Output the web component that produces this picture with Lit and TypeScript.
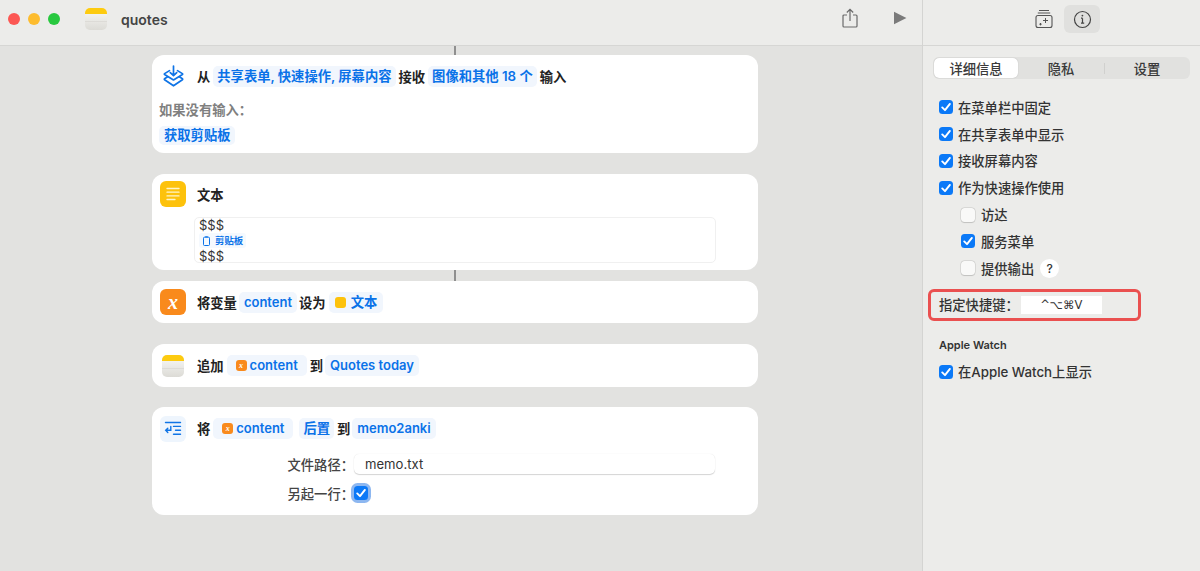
import { LitElement, html, css, svg } from "lit";
import { customElement } from "lit/decorators.js";

const check = svg`<svg viewBox="0 0 14 14" width="14" height="14"><path d="M3.2 7.4 6 10.2 10.9 3.9" fill="none" stroke="#fff" stroke-width="1.9" stroke-linecap="round" stroke-linejoin="round"/></svg>`;

const miniVar = html`<span class="mini orange">x</span>`;

@customElement("app-root")
export class AppRoot extends LitElement {
  static styles = css`
    :host { display: block; width: 1200px; height: 571px; overflow: hidden; background: #e2e2e0; color: #2a2a2a;
      font-family: "Inter", "Noto Sans CJK SC", sans-serif; font-size: 13.3px; }
    * { box-sizing: border-box; }
    .app { display: grid; grid-template-columns: 922px 278px; height: 571px; }
    .main { display: flex; flex-direction: column; min-width: 0; }
    .toolbar { height: 46px; flex: none; background: #ececea; border-bottom: 1px solid #d6d6d4; display: flex; align-items: center; padding: 0 0 7px 8px; }
    .lights { display: flex; gap: 8px; }
    .light { width: 12px; height: 12px; border-radius: 50%; }
    .red { background: #fc5753; }
    .amber { background: #fdbc2e; }
    .green { background: #28c83f; }
    .appicon { margin-left: 24px; display: flex; }
    .title { margin-left: 13px; font-size: 14px; font-weight: 600; color: #444; }
    .tools { margin-left: auto; display: flex; align-items: center; gap: 35px; padding: 0 15px 2px 0; }
    .canvas { flex: 1; display: flex; flex-direction: column; padding-left: 152px; }
    .stem { width: 2px; background: #8f8f8f; margin-left: 302px; flex: none; }
    .s9 { height: 9px; }
    .s11 { height: 11px; }
    .gap21 { height: 21px; flex: none; }
    .gap20 { height: 20px; flex: none; }
    .card { width: 606px; background: #fff; border-radius: 12px; flex: none; }
    .h98 { height: 98px; }
    .h96 { height: 96px; }
    .h42 { height: 42px; }
    .h43 { height: 43px; }
    .h108 { height: 108px; }
    .row { display: flex; align-items: center; height: 42px; padding-left: 8px; }
    .row.r40 { height: 40px; }
    .row.r43 { height: 43px; }
    .icon { width: 26px; height: 26px; flex: none; margin-right: 11px; display: flex; align-items: center; justify-content: center; border-radius: 6px; }
    .bg-yellow { background: #fdc20c; }
    .bg-orange { background: #f98a1c; color: #fff; font: italic 700 20px "Liberation Serif", serif; }
    .bg-blue { background: #eef5fd; }
    .word { font-weight: 600; color: #222; }
    .chip { background: #f1f6fd; color: #0a72e8; font-weight: 600; border-radius: 5px; padding: 0 4px; height: 21px; line-height: 21px; margin: 0 3px; display: inline-flex; align-items: center; white-space: nowrap; }
    .chip.p5 { padding: 0 5px; }
    .chip.p9 { padding: 0 9px; }
    .chip.p6 { padding: 0 6px; }
    .chip.tight { margin: 0 2px; }
    .en { font-size: 13px; }
    .mini { width: 11px; height: 11px; border-radius: 3px; margin-right: 3px; flex: none; display: inline-block; }
    .mini.m5 { margin-right: 5px; }
    .orange { background: #f98a1c; color: #fff; font: italic 700 8px/11px "Liberation Serif", serif; text-align: center; }
    .yellow { background: #fdc20c; }
    .gray { color: #7f7f7f; font-weight: 600; padding: 0 0 0 7px; height: 20px; line-height: 20px; margin-top: 3px; }
    .orphan { padding-left: 7px; margin-top: 6px; display: flex; }
    .orphan .chip { margin: 0; height: 19px; line-height: 19px; padding: 0 5px; }
    .textbox { margin: 3px 0 0 42px; width: 522px; height: 46px; border: 1px solid #f0f0f0; border-radius: 5px; padding: 0 4px; font-size: 13px; color: #333; line-height: 15px; }
    .pill { display: inline-flex; align-items: center; gap: 5px; color: #0a72e8; font-size: 9.4px; font-weight: 600; height: 15px; padding: 0 3px 0 4px; background: #f5f9fe; border-radius: 3px; line-height: 15px; }
    .field { display: flex; align-items: center; height: 20px; }
    .f1 { margin-top: 4px; }
    .f2 { margin-top: 9px; }
    .flabel { width: 202px; text-align: right; color: #444; font-weight: 500; flex: none; white-space: nowrap; }
    .input { width: 361px; height: 20px; background: #fff; border-radius: 5px; box-shadow: 0 1px 1px rgba(0,0,0,.16), 0 0 1px rgba(0,0,0,.12); padding-left: 11px; line-height: 20px; font-size: 13.1px; color: #333; }
    .bigcheck { width: 14px; height: 14px; border-radius: 3.5px; background: #0b79f7; display: flex; box-shadow: 0 0 0 3px #8db7f0; }
    .side { background: #ececea; border-left: 1px solid #d4d4d2; display: flex; flex-direction: column; }
    .sidetools { height: 46px; border-bottom: 1px solid #d6d6d4; display: flex; align-items: center; gap: 2.5px; padding: 0 0 7px 102.5px; flex: none; }
    .sidetool { width: 36px; height: 28px; border-radius: 6px; display: flex; align-items: center; justify-content: center; }
    .sidetool.active { background: #e0e0de; }
    .seg { margin: 11px 0 0 10px; width: 257px; height: 22px; background: #e1e1df; border-radius: 6px; display: grid; grid-template-columns: 85px 86px 86px; }
    .seg div { display: flex; align-items: center; justify-content: center; color: #3a3a3a; font-weight: 500; position: relative; }
    .seg .on { background: #fff; border-radius: 5px; margin: 1px 0 1px 1px; box-shadow: 0 0 1px rgba(0,0,0,.25); }
    .seg .sep { position: absolute; left: 0; top: 6px; height: 11px; border-left: 1px solid #d0d0ce; }
    .list { margin-top: 15px; padding-left: 16px; display: flex; flex-direction: column; }
    .opt { display: flex; align-items: center; height: 26.8px; gap: 5px; color: #333; font-weight: 500; white-space: nowrap; }
    .opt.sub { padding-left: 22px; gap: 6px; }
    .box { width: 14px; height: 14px; border-radius: 3.5px; flex: none; display: flex; background: #0b79f7; }
    .box.off { background: #f9f9f8; box-shadow: 0 0 0 .5px rgba(0,0,0,.14), 0 .5px 1px rgba(0,0,0,.12); }
    .help { width: 19px; height: 19px; border-radius: 50%; background: #fff; display: flex; align-items: center; justify-content: center; font-size: 12px; color: #333; }
    .shortcut { margin: 7px 0 0 5px; width: 213px; height: 32px; border: 3px solid #ea5050; border-radius: 6px; display: flex; align-items: center; padding-left: 8px; color: #333; font-weight: 500; }
    .keys { margin-left: 2px; width: 81px; height: 18px; background: #fff; text-align: center; line-height: 18px; font-size: 11.5px; font-family: "DejaVu Sans", sans-serif; }
    .h { margin: 17px 0 0 16px; font-size: 11px; font-weight: 600; color: #333; height: 15px; line-height: 15px; }
    .list.last { margin-top: 6px; }
  `;

  private box(on: boolean) {
    return html`<span class="box ${on ? "" : "off"}">${on ? check : ""}</span>`;
  }

  private opt(label: string, on: boolean, sub = false, extra: unknown = "") {
    return html`<div class="opt ${sub ? "sub" : ""}">${this.box(on)}<span>${label}</span>${extra}</div>`;
  }

  private notes(size: number) {
    const id = `n${size}`;
    return svg`<svg width=${size} height=${size} viewBox="0 0 24 24">
      <defs><linearGradient id=${id} x1="0" y1="0" x2="0" y2="1"><stop offset="0" stop-color="#fafaf8"/><stop offset="1" stop-color="#dcdbd6"/></linearGradient></defs>
      <rect x="1" y="1" width="22" height="22" rx="5" fill="url(#${id})"/>
      <path d="M1 7V6a5 5 0 0 1 5-5h12a5 5 0 0 1 5 5v1z" fill="#fdcb10"/>
      <path d="M1 14.5h22" stroke="#d5d4cf" stroke-width=".6"/></svg>`;
  }

  render() {
    return html`<div class="app">
      <div class="main">
        <div class="toolbar">
          <div class="lights">
            <span class="light red"></span>
            <span class="light amber"></span>
            <span class="light green"></span>
          </div>
          <span class="appicon">${this.notes(24)}</span>
          <span class="title">quotes</span>
          <div class="tools">
            <svg width="16" height="20" viewBox="0 0 16 20" fill="none" stroke="#6a6a6a" stroke-width="1.2"><path d="M5 7H2a1 1 0 0 0-1 1v10a1 1 0 0 0 1 1h12a1 1 0 0 0 1-1V8a1 1 0 0 0-1-1h-3"/><path d="M8 13V1.5M4.8 4.5 8 1.3l3.2 3.2"/></svg>
            <svg width="14" height="14" viewBox="0 0 14 14"><path d="M1 .8v12.4L13.4 7z" fill="#7a7a7a"/></svg>
          </div>
        </div>
        <div class="canvas">
          <div class="stem s9"></div>
          <div class="card h98">
            <div class="row">
              <span class="icon">
                <svg width="21" height="22" viewBox="0 0 21 22" fill="none" stroke="#0f74e6" stroke-width="1.7" stroke-linejoin="round" stroke-linecap="round"><path d="M6.5 5.6 1.6 8.6a.6.6 0 0 0 0 1L10.5 15l8.9-5.4a.6.6 0 0 0 0-1l-4.9-3"/><path d="M4.6 11.8 1.6 13.8a.6.6 0 0 0 0 1l8.9 6 8.9-6a.6.6 0 0 0 0-1l-3-2"/><path d="M10.5 1v9M7.3 7.6l3.2 3 3.2-3"/></svg>
              </span>
              <span class="word">从</span>
              <span class="chip">共享表单, 快速操作, 屏幕内容</span>
              <span class="word">接收</span>
              <span class="chip">图像和其他 18 个</span>
              <span class="word">输入</span>
            </div>
            <div class="gray">如果没有输入：</div>
            <div class="orphan"><span class="chip">获取剪贴板</span></div>
          </div>
          <div class="gap21"></div>
          <div class="card h96">
            <div class="row r40">
              <span class="icon bg-yellow">
                <svg width="16" height="14" viewBox="0 0 16 14" stroke="#fff5c9" stroke-width="1.3" stroke-linecap="round"><path d="M2 1.5h12M2 5.2h12M2 8.9h12M2 12.5h8"/></svg>
              </span>
              <span class="word">文本</span>
            </div>
            <div class="textbox">
              <div>$$$</div>
              <div><span class="pill"><svg width="7" height="10" viewBox="0 0 7 10" fill="none" stroke="#0a72e8"><rect x=".5" y="1.2" width="6" height="8.3" rx="1"/><path d="M2.2.8h2.6"/></svg>剪贴板</span></div>
              <div>$$$</div>
            </div>
          </div>
          <div class="stem s11"></div>
          <div class="card h42">
            <div class="row">
              <span class="icon bg-orange">x</span>
              <span class="word">将变量</span>
              <span class="chip p5 tight en">content</span>
              <span class="word">设为</span>
              <span class="chip p6"><span class="mini m5 yellow"></span>文本</span>
            </div>
          </div>
          <div class="gap21"></div>
          <div class="card h43">
            <div class="row r43">
              <span class="icon">${this.notes(24)}</span>
              <span class="word">追加</span>
              <span class="chip p9 en">${miniVar}content</span>
              <span class="word">到</span>
              <span class="chip p5 tight en">Quotes today</span>
            </div>
          </div>
          <div class="gap20"></div>
          <div class="card h108">
            <div class="row r43">
              <span class="icon bg-blue">
                <svg width="18" height="15" viewBox="0 0 18 15" fill="none" stroke="#0f74e6" stroke-width="1.4" stroke-linecap="round"><path d="M1.5 1.5h15M9.5 5.4h7M11.5 9.3h5M9.5 13.2h7"/><path d="M6.8 5.5v3.8H1.8M3.8 7.2 1.7 9.3l2.1 2.1"/></svg>
              </span>
              <span class="word">将</span>
              <span class="chip p9 en">${miniVar}content</span>
              <span class="chip">后置</span>
              <span class="word">到</span>
              <span class="chip p5 tight en">memo2anki</span>
            </div>
            <div class="field f1"><span class="flabel">文件路径：</span><span class="input">memo.txt</span></div>
            <div class="field f2"><span class="flabel">另起一行：</span><span class="bigcheck">${check}</span></div>
          </div>
        </div>
      </div>
      <div class="side">
        <div class="sidetools">
          <span class="sidetool">
            <svg width="18" height="20" viewBox="0 0 18 20" fill="none" stroke="#555" stroke-width="1.1"><path d="M4 1.5h10M2.8 4h12.4"/><rect x="1" y="6.5" width="16" height="12" rx="2"/><path d="M10.5 9v5M8 11.5h5M5.5 14v2.4M4.3 15.2h2.4" stroke-width="1"/></svg>
          </span>
          <span class="sidetool active">
            <svg width="19" height="19" viewBox="0 0 19 19" fill="none" stroke="#444" stroke-width="1.2"><circle cx="9.5" cy="9.5" r="8"/><path d="M9.5 8.2v5M8 8.2h1.5M8 13.2h3.2"/><circle cx="9.4" cy="5.6" r=".9" fill="#444" stroke="none"/></svg>
          </span>
        </div>
        <div class="seg">
          <div class="on">详细信息</div><div>隐私</div><div><span class="sep"></span>设置</div>
        </div>
        <div class="list">
          ${this.opt("在菜单栏中固定", true)}
          ${this.opt("在共享表单中显示", true)}
          ${this.opt("接收屏幕内容", true)}
          ${this.opt("作为快速操作使用", true)}
          ${this.opt("访达", false, true)}
          ${this.opt("服务菜单", true, true)}
          ${this.opt("提供输出", false, true, html`<span class="help">?</span>`)}
        </div>
        <div class="shortcut"><span>指定快捷键：</span><span class="keys">^⌥⌘V</span></div>
        <div class="h">Apple Watch</div>
        <div class="list last">${this.opt("在Apple Watch上显示", true)}</div>
      </div>
    </div>`;
  }
}
